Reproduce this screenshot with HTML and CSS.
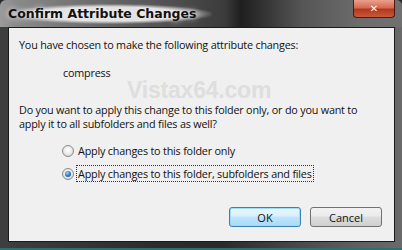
FILE: index.html
```html
<!DOCTYPE html>
<html>
<head>
<meta charset="utf-8">
<link rel="stylesheet" href="styles.css">
</head>
<body>
<div class="window">
  <div class="titlebar">
    <span class="title">Confirm Attribute Changes</span>
    <span class="close">&#x2715;</span>
  </div>
  <div class="content">
    <p class="line first">You have chosen to make the following attribute changes:</p>
    <p class="attr">compress</p>
    <p class="question">Do you want to apply this change to this folder only, or do you want to apply it to all subfolders and files as well?</p>
    <div class="options">
      <label class="opt"><span class="radio"></span><span class="lbl">Apply changes to this folder only</span></label>
      <label class="opt"><span class="radio on"></span><span class="lbl focus">Apply changes to this folder, subfolders and files</span></label>
    </div>
    <div class="buttons">
      <button class="btn default">OK</button>
      <button class="btn">Cancel</button>
    </div>
    <span class="watermark">Vistax64.com</span>
  </div>
</div>
</body>
</html>
```
FILE: styles.css
```css
* { box-sizing: border-box; }
html, body { margin: 0; padding: 0; background: #2a2a2a; }
.window {
  width: 402px; height: 250px;
  background: linear-gradient(90deg, #3e3e3e 0%, #2c2c2c 40%, #2a2a2a 55%, #5a5a5a 85%, #6a6a6a 100%);
  border-radius: 6px 6px 0 0;
  display: flex; flex-direction: column;
  position: relative;
  border-bottom: 2px solid #2f6f72;
}
.titlebar {
  height: 27px; display: flex; justify-content: space-between; align-items: flex-start;
  padding-left: 8px; padding-right: 8px;
  background: linear-gradient(90deg, #9a9a9a 0%, #8a8a8a 4%, #3b3b3b 56%, #1f1f1f 60%, #555 75%, #6d6d6d 90%, #707070 100%);
  border-radius: 6px 6px 0 0;
}
.title {
  font-family: "DejaVu Sans", sans-serif; font-weight: bold; font-size: 12.5px;
  color: #111; margin-top: 4px;
  background: radial-gradient(ellipse at center, rgba(230,230,230,0.95) 50%, rgba(230,230,230,0) 72%);
  padding: 2px 16px 3px 0;
  text-shadow: 0 0 6px #fff;
}
.close {
  width: 42px; height: 18px; margin-right: -1px;
  background: linear-gradient(180deg, #e9a08c 0%, #d66a50 45%, #b3371e 55%, #c85a3a 100%);
  border: 1px solid #4a1a10; border-top: none;
  border-radius: 0 0 4px 4px;
  color: #fff; font-family: "DejaVu Sans", sans-serif; font-weight: bold; font-size: 10px;
  display: flex; align-items: center; justify-content: center;
}
.content {
  flex: 1; margin: 0 7px 6px 8px;
  background: #f0f0f0; border: 1px solid #1a1a1a;
  padding: 9px 11px 0 10px;
  position: relative;
  font-family: "Open Sans", sans-serif; font-size: 10.8px; letter-spacing: -0.2px; color: #111;
  display: flex; flex-direction: column;
}
p { margin: 0; position: relative; z-index: 1; }
.line { line-height: 15px; }
.attr { margin: 13px 0 0 44px; line-height: 15px; }
.question { margin-top: 23px; line-height: 14px; max-width: 352px; }
.options { display: flex; flex-direction: column; gap: 8px; margin: 12px 0 0 43px; position: relative; z-index: 1; }
.opt { display: flex; align-items: center; gap: 2px; height: 15px; }
.radio {
  width: 12px; height: 12px; border-radius: 50%;
  border: 1px solid #8a8a8a;
  background: radial-gradient(circle at 50% 40%, #fff 0%, #e8e8e8 55%, #c8c8c8 100%);
  position: relative;
}
.radio.on::after {
  content: ""; position: absolute; left: 2px; top: 2px; width: 6px; height: 6px; border-radius: 50%;
  background: radial-gradient(circle at 40% 35%, #a9d4f5 0%, #2b7cc5 50%, #12406e 100%);
}
.lbl { padding: 0 1px; line-height: 15px; border: 1px solid transparent; }
.lbl.focus { border: 1px dotted #333; }
.buttons { display: flex; justify-content: flex-end; gap: 9px; margin-top: 26px; margin-right: 1px; }
.btn {
  width: 72px; height: 20px; font-family: "Open Sans", sans-serif; font-size: 11px; color: #111;
  border: 1px solid #707070; border-radius: 3px;
  background: linear-gradient(180deg, #f2f2f2 0%, #ebebeb 45%, #dddddd 50%, #cfcfcf 100%);
  padding: 0;
}
.btn.default {
  border-color: #3c7fb1;
  box-shadow: inset 0 0 0 1px #9fdcf7;
  background: linear-gradient(180deg, #eaf6fd 0%, #d9f0fc 45%, #bee6fd 50%, #a7d9f5 100%);
}
.watermark {
  position: absolute; left: 118px; top: 49px;
  font-family: "Liberation Sans", sans-serif; font-weight: bold; font-size: 23px;
  color: #dedede;
  pointer-events: none; z-index: 0;
}
```
